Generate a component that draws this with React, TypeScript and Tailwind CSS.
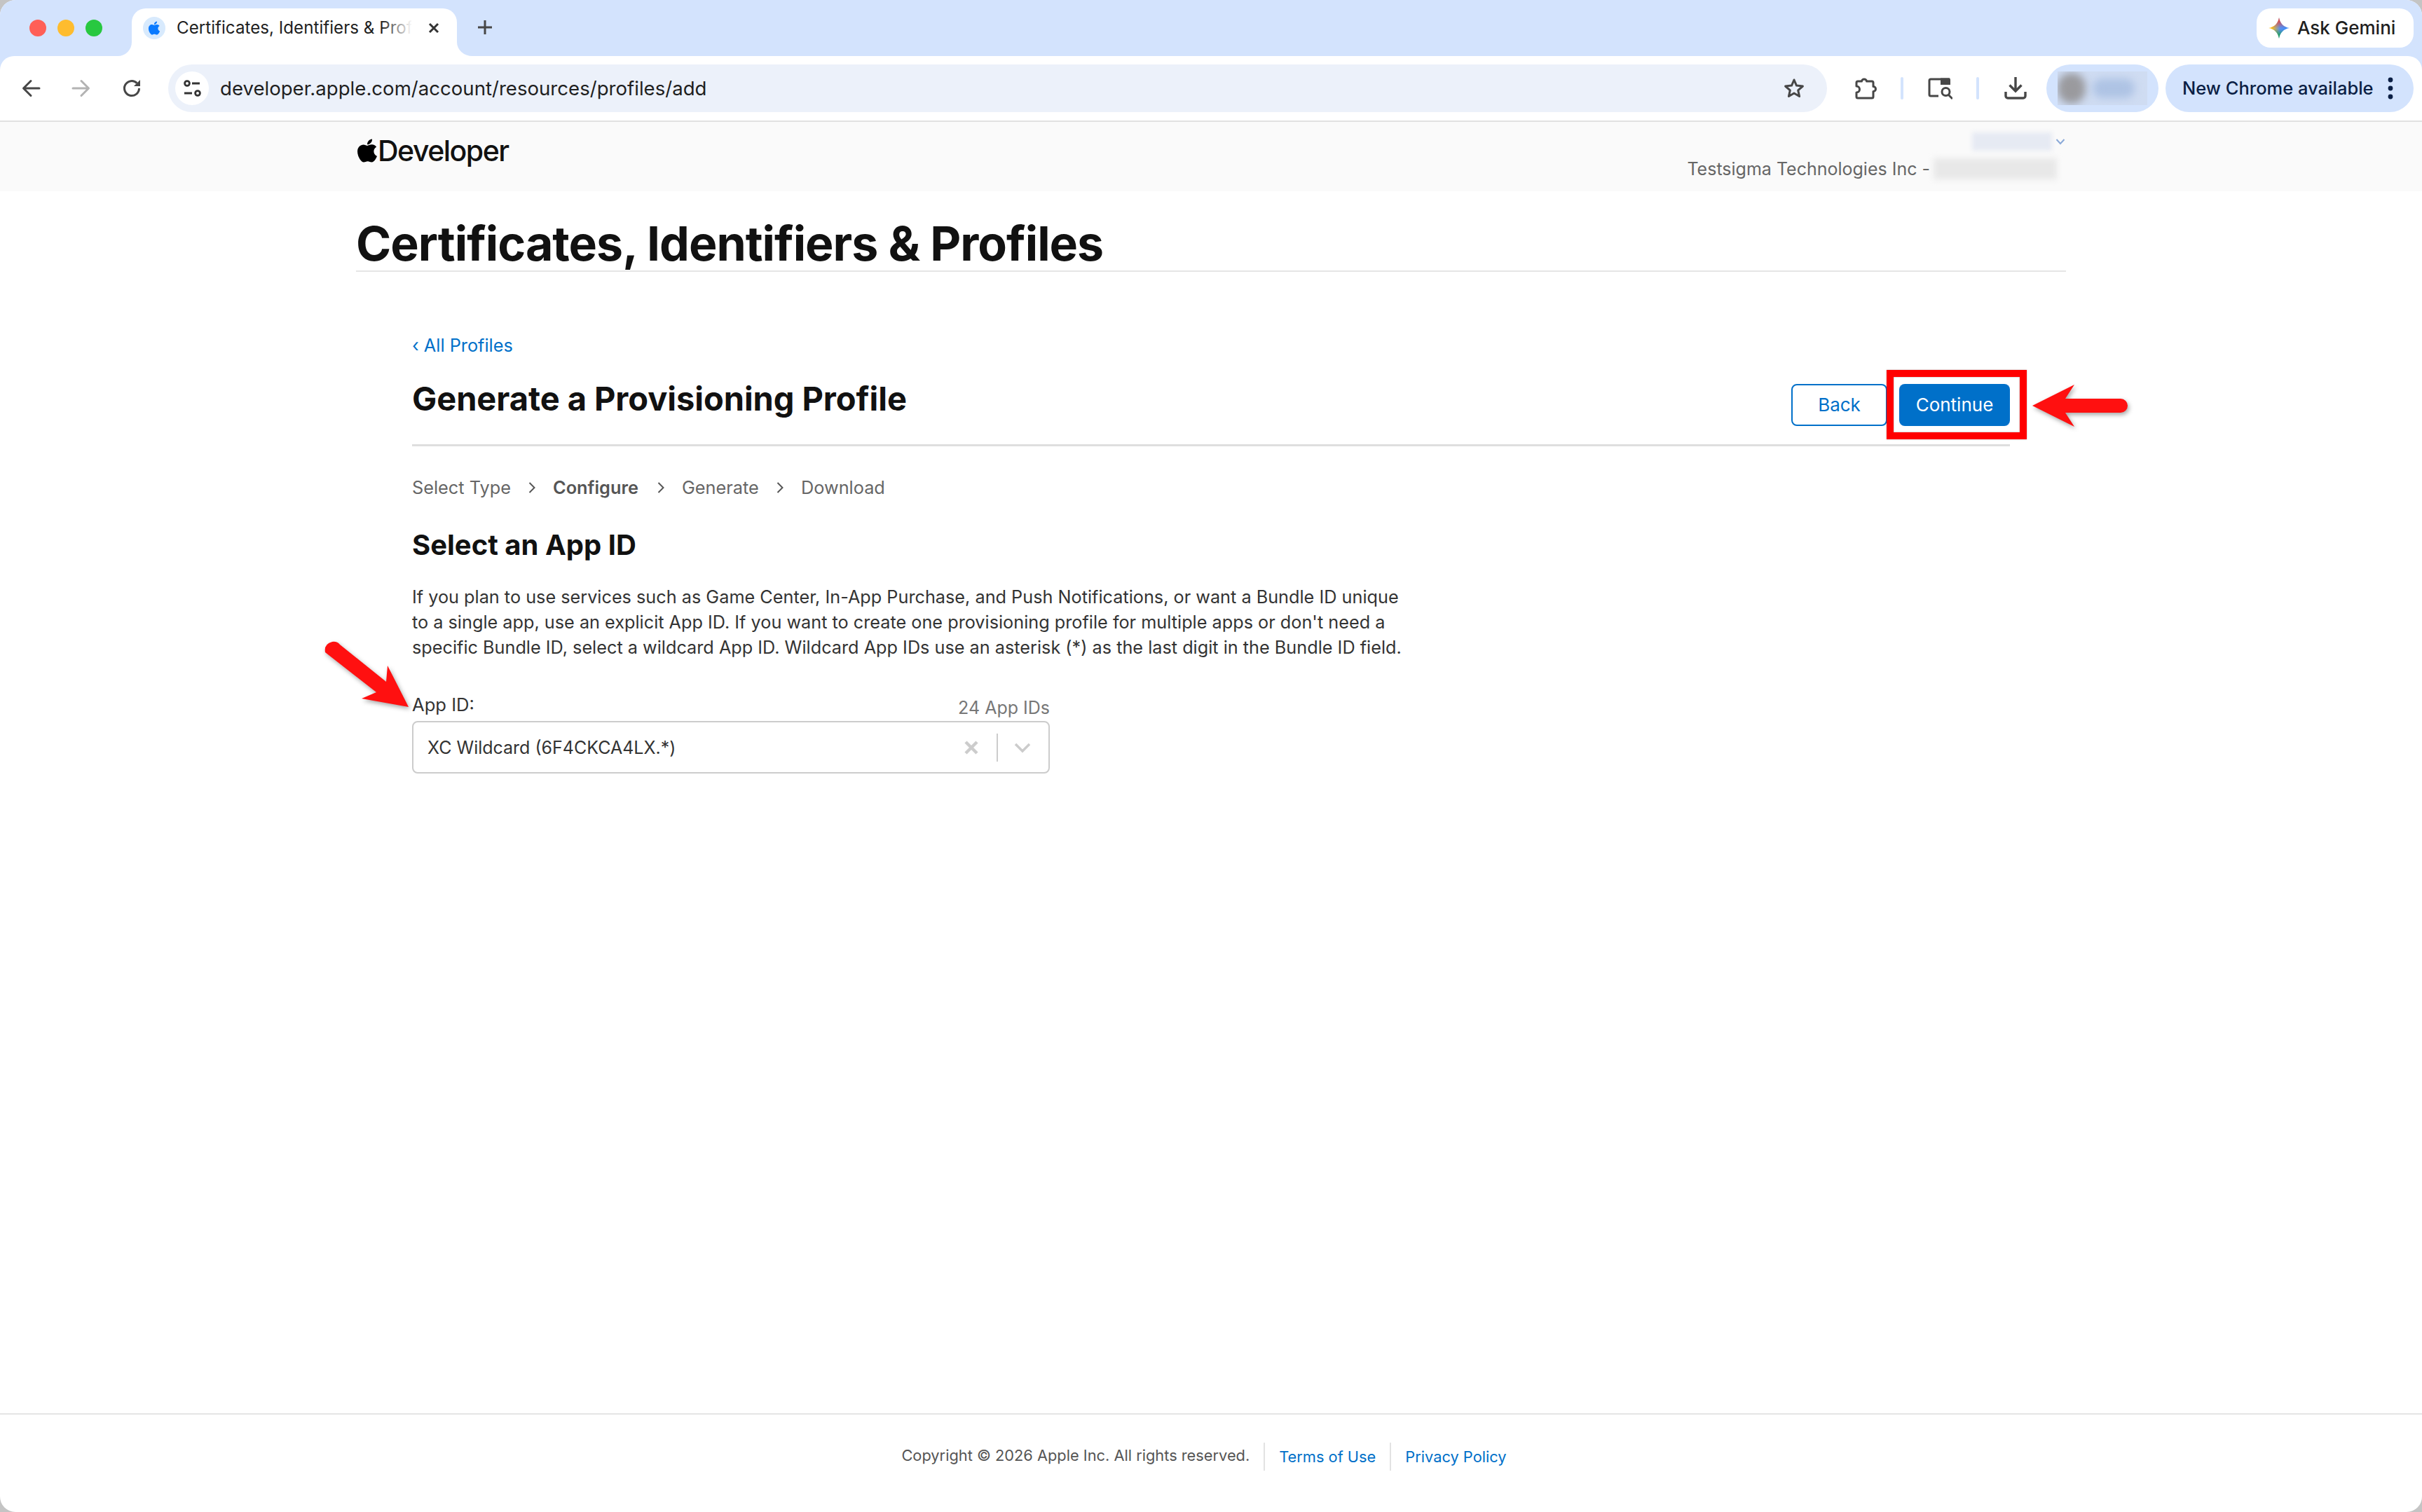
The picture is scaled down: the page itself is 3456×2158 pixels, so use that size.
import { FaApple } from 'react-icons/fa';

const steps = [
  { label: 'Select Type', width: 'w-[141px]', bold: false },
  { label: 'Configure', width: 'w-[124px]', bold: true },
  { label: 'Generate', width: 'w-[110px]', bold: false },
  { label: 'Download', width: 'w-[120px]', bold: false },
];

function BackIcon({ color }: { color: string }) {
  return (
    <svg width="32" height="32" viewBox="0 0 32 32" fill="none" stroke={color} strokeWidth="3" strokeLinecap="round" strokeLinejoin="round">
      <path d="M28 16H6M16 5.5 5.5 16 16 26.5" />
    </svg>
  );
}

function ForwardIcon({ color }: { color: string }) {
  return (
    <svg width="32" height="32" viewBox="0 0 32 32" fill="none" stroke={color} strokeWidth="3" strokeLinecap="round" strokeLinejoin="round">
      <path d="M4 16H26M16 5.5 26.5 16 16 26.5" />
    </svg>
  );
}

function ReloadIcon() {
  return (
    <svg width="32" height="32" viewBox="0 0 32 32" fill="none">
      <path d="M23.4 8.6A10.5 10.5 0 1 0 26.5 16" stroke="#474747" strokeWidth="3" />
      <path d="M28 4v9h-9z" fill="#474747" />
    </svg>
  );
}

function TuneIcon() {
  return (
    <svg width="32" height="32" viewBox="0 0 32 32" fill="none" stroke="#333" strokeWidth="2.8">
      <circle cx="9" cy="9" r="3.4" />
      <path d="M16 9h11M5 23h11" />
      <circle cx="24" cy="23" r="3.4" />
    </svg>
  );
}

function StarIcon() {
  return (
    <svg width="32" height="32" viewBox="0 0 32 32" fill="none" stroke="#474747" strokeWidth="3" strokeLinejoin="round">
      <path d="M16 4l3.5 8.1 8.9.9-6.7 5.9L23.6 27.5 16 23l-7.600 4.500 1.900-8.600L3.600 13l8.900-.9z" />
    </svg>
  );
}

function ExtensionIcon() {
  return (
    <svg width="36" height="36" viewBox="0 0 36 36" fill="none" stroke="#474747" strokeWidth="3" strokeLinejoin="round">
      <path d="M7 8h5.500a3.500 3 0 0 1 7 0H27a2 2 0 0 1 2 2v5.500a3.500 3.500 0 0 1 0 7V30a2 2 0 0 1-2 2H7a2 2 0 0 1-2-2v-6a4.500 4.500 0 0 0 0-9v-5a2 2 0 0 1 2-2z" />
    </svg>
  );
}

function TabSearchIcon() {
  return (
    <svg width="36" height="36" viewBox="0 0 36 36" fill="none" stroke="#474747" strokeWidth="3">
      <path d="M32 5H5a2 2 0 0 0-2 2v20a2 2 0 0 0 2 2h11" />
      <path d="M19 3.500h12a2 2 0 0 1 2 2V13H19z" fill="#474747" stroke="none" />
      <circle cx="26.500" cy="23" r="5.500" />
      <path d="M30.500 27.500 36 33" />
    </svg>
  );
}

function DownloadIcon() {
  return (
    <svg width="32" height="32" viewBox="0 0 32 32" fill="none" stroke="#474747" strokeWidth="3.400">
      <path d="M16 0v19M7.500 11.500 16 20l8.500-8.500" />
      <path d="M2 21v6a3 3 0 0 0 3 3h22a3 3 0 0 0 3-3v-6" />
    </svg>
  );
}

function KebabIcon() {
  return (
    <svg width="8" height="32" viewBox="0 0 8 32" fill="#0b1f45">
      <circle cx="4" cy="4" r="3.400" />
      <circle cx="4" cy="16" r="3.400" />
      <circle cx="4" cy="28" r="3.400" />
    </svg>
  );
}

function GeminiIcon() {
  const star = 'M16 1C17 9 23 15 31 16 23 17 17 23 16 31 15 23 9 17 1 16 9 15 15 9 16 1Z';
  return (
    <svg width="32" height="32" viewBox="0 0 32 32">
      <defs>
        <linearGradient id="gemH" x1="0" x2="1" y1="0" y2="0">
          <stop offset="0.15" stopColor="#fbbc15" />
          <stop offset="0.55" stopColor="#5b8ff0" />
          <stop offset="1" stopColor="#2f8cff" />
        </linearGradient>
        <linearGradient id="gemR" x1="0" x2="0" y1="0" y2="1">
          <stop offset="0.1" stopColor="#ea4335" />
          <stop offset="0.5" stopColor="#ea4335" stopOpacity="0" />
        </linearGradient>
        <linearGradient id="gemG" x1="0" x2="0" y1="0" y2="1">
          <stop offset="0.55" stopColor="#12a150" stopOpacity="0" />
          <stop offset="0.9" stopColor="#12a150" />
        </linearGradient>
      </defs>
      <path d={star} fill="url(#gemH)" />
      <path d={star} fill="url(#gemR)" />
      <path d={star} fill="url(#gemG)" />
    </svg>
  );
}

function StepChevron() {
  return (
    <svg width="12" height="18" viewBox="0 0 12 18" fill="none" stroke="#555" strokeWidth="2">
      <path d="M2.500 2 9.500 9l-7 7" />
    </svg>
  );
}

function TabFlare({ side }: { side: 'left' | 'right' }) {
  return side === 'left' ? (
    <svg className="absolute bottom-0 -left-[20px]" width="20" height="20" viewBox="0 0 20 20" fill="#fff">
      <path d="M20 0v20H0A20 20 0 0 0 20 0z" />
    </svg>
  ) : (
    <svg className="absolute bottom-0 -right-[22px]" width="22" height="20" viewBox="0 0 22 20" fill="#fff">
      <path d="M0 0v20h22A22 20 0 0 1 0 0z" />
    </svg>
  );
}

function BrowserChrome() {
  return (
    <div className="bg-[#d3e3fd]">
      <div className="flex h-[80px] items-start pt-[12px]">
        <div className="flex h-[56px] w-[188px] items-center gap-[16px] pl-[42px]">
          <span className="h-[24px] w-[24px] rounded-full bg-[#ff5f57]" />
          <span className="h-[24px] w-[24px] rounded-full bg-[#febc2e]" />
          <span className="h-[24px] w-[24px] rounded-full bg-[#28c840]" />
        </div>
        <div className="relative flex h-[68px] w-[464px] items-center rounded-t-[20px] bg-white pb-[12px]">
          <TabFlare side="left" />
          <span className="ml-[16px] flex h-[32px] w-[32px] items-center justify-center rounded-full bg-[#d8eafd]">
            <FaApple className="text-[#0a7aff]" size={22} />
          </span>
          <span className="relative ml-[16px] w-[336px] overflow-hidden whitespace-nowrap text-[24.2px] leading-[36px] text-[#1f1f1f]">
            Certificates, Identifiers &amp; Profiles
            <span className="absolute inset-y-0 right-0 w-[44px] bg-linear-to-l from-white to-transparent" />
          </span>
          <svg className="ml-[21px]" width="20" height="20" viewBox="0 0 20 20" fill="none" stroke="#333" strokeWidth="3">
            <path d="M4 4l12 12M16 4 4 16" />
          </svg>
          <TabFlare side="right" />
        </div>
        <svg className="ml-[28px] mt-[15px]" width="24" height="24" viewBox="0 0 24 24" fill="none" stroke="#474747" strokeWidth="3">
          <path d="M12 2v20M2 12h20" />
        </svg>
        <div className="ml-auto mr-[12px] flex h-[56px] w-[224px] items-center rounded-[20px] bg-white pl-[16px]">
          <GeminiIcon />
          <span className="ml-[10px] text-[26px] font-medium leading-[36px] text-[#1f1f1f]">Ask Gemini</span>
        </div>
      </div>
      <div className="flex h-[92px] items-center rounded-t-[20px] bg-white pl-[28px] pr-[12px]">
        <BackIcon color="#474747" />
        <span className="ml-[40px]">
          <ForwardIcon color="#b3b3b3" />
        </span>
        <span className="ml-[40px]">
          <ReloadIcon />
        </span>
        <div className="ml-[36px] flex h-[68px] w-[2367px] items-center rounded-full bg-[#ecf1fa] pl-[10px] pr-[31px]">
          <span className="flex h-[48px] w-[48px] items-center justify-center rounded-full bg-white">
            <TuneIcon />
          </span>
          <span className="ml-[16px] text-[27.6px] leading-[36px] text-[#1f1f1f]">developer.apple.com/account/resources/profiles/add</span>
          <span className="ml-auto">
            <StarIcon />
          </span>
        </div>
        <span className="ml-[37px]">
          <ExtensionIcon />
        </span>
        <span className="ml-[32px] h-[32px] w-[4px] rounded-full bg-[#d3e3fd]" />
        <span className="ml-[34px]">
          <TabSearchIcon />
        </span>
        <span className="ml-[34px] h-[32px] w-[4px] rounded-full bg-[#d3e3fd]" />
        <span className="ml-[36px]">
          <DownloadIcon />
        </span>
        <div className="ml-[28px] flex h-[68px] w-[160px] items-center justify-center rounded-full bg-[#d3e3fd]">
          <div className="flex h-[48px] w-[128px] items-center gap-[10px] overflow-hidden bg-[#cfdcf2]">
            <span className="h-[44px] w-[40px] rounded-full bg-[#9a9a9e] blur-[6px]" />
            <span className="h-[28px] w-[60px] rounded-full bg-[#aec3e4] blur-[6px]" />
          </div>
        </div>
        <div className="ml-[10px] flex h-[68px] w-[354px] items-center rounded-full bg-[#d3e3fd] pl-[24px]">
          <span className="text-[25.5px] font-medium leading-[36px] text-[#0b1f45]">New Chrome available</span>
          <span className="ml-[20px]">
            <KebabIcon />
          </span>
        </div>
      </div>
      <div className="h-[2px] bg-[#e1e1e1]" />
    </div>
  );
}

function PageHeader() {
  return (
    <div className="h-[99px] bg-[#fafafa]">
      <div className="mx-auto flex w-[2440px] items-start justify-between pr-[1px]">
        <div className="-ml-[3px] flex items-center pt-[16px]">
          <FaApple className="text-black" size={38} />
          <span className="-ml-[4px] text-[41px] font-medium leading-[50px] tracking-[-1.500px] text-[#111]">Developer</span>
        </div>
        <div className="flex flex-col items-end pt-[14px]">
          <div className="flex h-[28px] items-center">
            <span className="h-[26px] w-[114px] bg-[#e6eaf3] blur-[3px]" />
            <svg className="ml-[5px]" width="14" height="10" viewBox="0 0 14 10" fill="none" stroke="#8aa9d8" strokeWidth="2">
              <path d="M1.500 2 7 8l5.500-6" />
            </svg>
          </div>
          <div className="mt-[8px] flex h-[34px] items-center">
            <span className="text-[25px] leading-[36px] text-[#666]">Testsigma Technologies Inc -</span>
            <span className="ml-[5px] mr-[12px] h-[30px] w-[176px] bg-[#e8e8e8] blur-[4px]" />
          </div>
        </div>
      </div>
    </div>
  );
}

function MainContent() {
  return (
    <div className="mx-auto w-[2440px]">
      <div className="border-b-2 border-[#e5e5e5] pb-[5px] pt-[40px]">
        <h1 className="whitespace-nowrap text-[68px] font-bold leading-[68px] tracking-[-1px] text-[#111]">Certificates, Identifiers &amp; Profiles</h1>
      </div>
      <div className="px-[80px]">
        <div className="mt-[87px] text-[25.3px] leading-[36px] text-[#0070c9]">‹ All Profiles</div>
        <div className="flex h-[126px] items-start justify-between border-b-[3px] border-[#dedede]">
          <h2 className="mt-[32px] text-[47px] font-bold leading-[52px] tracking-[-0.060px] text-[#111]">Generate a Provisioning Profile</h2>
          <div className="mt-[37px] flex gap-[17px]">
            <button className="h-[60px] w-[137px] rounded-[8px] border-[2.500px] border-[#0070c9] pb-[2px] text-[26px] font-normal text-[#0070c9]">Back</button>
            <button className="h-[60px] w-[158px] rounded-[8px] bg-[#0070c9] pb-[2px] text-[26px] font-normal text-white">Continue</button>
          </div>
        </div>
        <div className="mt-[41px] flex h-[36px] items-center text-[25.3px] leading-[36px] text-[#666]">
          {steps.map((step, idx) => (
            <div key={step.label} className="flex items-center">
              <span className={`${step.width} whitespace-nowrap ${step.bold ? 'font-semibold text-[#555]' : ''}`}>{step.label}</span>
              {idx < steps.length - 1 && (
                <span className="flex w-[60px] justify-center">
                  <StepChevron />
                </span>
              )}
            </div>
          ))}
        </div>
        <h3 className="mt-[40px] text-[40px] font-bold leading-[48px] text-[#111]">Select an App ID</h3>
        <p className="mt-[32px] whitespace-nowrap text-[25.25px] leading-[36px] text-[#333]">
          If you plan to use services such as Game Center, In-App Purchase, and Push Notifications, or want a Bundle ID unique
          <br />
          to a single app, use an explicit App ID. If you want to create one provisioning profile for multiple apps or don't need a
          <br />
          specific Bundle ID, select a wildcard App ID. Wildcard App IDs use an asterisk (*) as the last digit in the Bundle ID field.
        </p>
        <div className="mt-[46px] flex w-[910px] items-start justify-between">
          <span className="text-[25.6px] leading-[36px] text-[#333]">App ID:</span>
          <span className="mt-[4px] text-[25px] leading-[36px] text-[#777]">24 App IDs</span>
        </div>
        <div className="mt-[1px] flex h-[75px] w-[910px] items-center rounded-[8px] border-2 border-[#ccc] pl-[20px]">
          <span className="text-[25px] leading-[36px] text-[#333]">XC Wildcard (6F4CKCA4LX.*)</span>
          <svg className="ml-auto" width="22" height="20" viewBox="0 0 22 20" fill="none" stroke="#ccc" strokeWidth="4.500">
            <path d="M3 2l16 16M19 2 3 18" />
          </svg>
          <span className="ml-[25px] h-[40px] w-[2px] bg-[#ccc]" />
          <svg className="ml-[23px] mr-[25px]" width="24" height="16" viewBox="0 0 24 16" fill="none" stroke="#ccc" strokeWidth="3.500">
            <path d="M2 3l10 10L22 3" />
          </svg>
        </div>
      </div>
    </div>
  );
}

function PageFooter() {
  return (
    <div className="mt-auto flex h-[141px] items-center justify-center border-t-2 border-[#e5e5e5] pb-[20px] pr-[20px] leading-[40px]">
      <span className="-mt-[3px] text-[21.8px] text-[#555]">Copyright © 2026 Apple Inc. All rights reserved.</span>
      <span className="ml-[20px] h-[40px] w-[2px] bg-[#e3e3e3]" />
      <span className="ml-[20px] text-[21.8px] text-[#0070c9]">Terms of Use</span>
      <span className="ml-[20px] h-[40px] w-[2px] bg-[#e3e3e3]" />
      <span className="ml-[20px] text-[21.8px] text-[#0070c9]">Privacy Policy</span>
    </div>
  );
}

function Annotations() {
  return (
    <>
      <div className="absolute left-[2692px] top-[528px] h-[99px] w-[200px] border-[10px] border-[#ff0000] shadow-[inset_0_0_2px_rgba(0,0,0,0.4),0_0_2px_rgba(0,0,0,0.3)]" />
      <svg className="absolute left-[2890px] top-[540px] drop-shadow-[2px_3px_3px_rgba(0,0,0,0.35)]" width="160" height="80" viewBox="0 0 160 80" fill="#ff1010">
        <path d="M10 39 70 9 57 29H136A10 10 0 0 1 136 49H57L70 69Z" />
      </svg>
      <svg className="absolute left-[450px] top-[905px] drop-shadow-[2px_3px_3px_rgba(0,0,0,0.35)]" width="145" height="115" viewBox="0 0 145 115" fill="#ff1010">
        <path d="M14 26Q12 14 24 11 31 10 35 15L101 68 103 45 133 104 66 92 87 83Z" />
      </svg>
    </>
  );
}

export default function App() {
  return (
    <div className="relative h-[2158px] w-[3456px] overflow-hidden bg-[#c4c4c4] font-[family-name:Inter,sans-serif]">
      <div className="flex h-full flex-col overflow-hidden rounded-[22px] bg-white">
        <BrowserChrome />
        <PageHeader />
        <MainContent />
        <PageFooter />
      </div>
      <Annotations />
    </div>
  );
}
